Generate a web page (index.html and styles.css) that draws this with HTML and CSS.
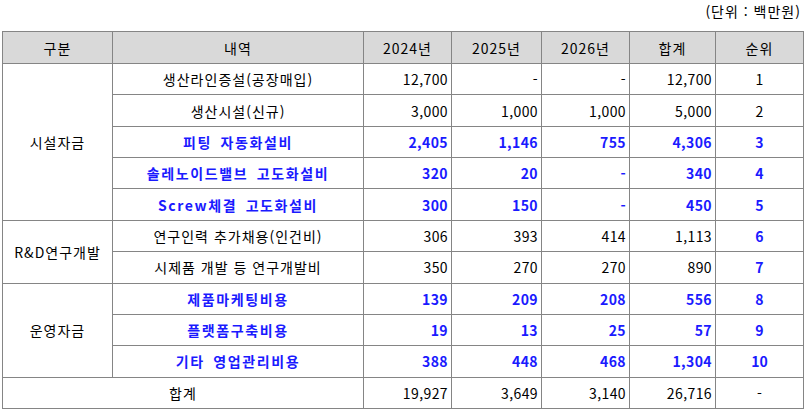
FILE: index.html
```html
<!DOCTYPE html>
<html lang="ko">
<head>
<meta charset="utf-8">
<title>자금 사용 계획</title>
<link rel="stylesheet" href="styles.css">
</head>
<body>
<div class="wrap">
  <div class="unit">(단위 : 백만원)</div>
  <table class="plan">
    <colgroup>
      <col class="c-cat"><col class="c-desc"><col class="c-y1"><col class="c-y2"><col class="c-y3"><col class="c-sum"><col class="c-rank">
    </colgroup>
    <thead>
      <tr class="head">
        <th>구분</th><th>내역</th><th>2024년</th><th>2025년</th><th>2026년</th><th>합계</th><th>순위</th>
      </tr>
    </thead>
    <tbody>
      <tr>
        <td class="cat" rowspan="5">시설자금</td>
        <td class="desc">생산라인증설(공장매입)</td>
        <td class="num">12,700</td><td class="num">-</td><td class="num">-</td><td class="num">12,700</td><td class="rank">1</td>
      </tr>
      <tr>
        <td class="desc">생산시설(신규)</td>
        <td class="num">3,000</td><td class="num">1,000</td><td class="num">1,000</td><td class="num">5,000</td><td class="rank">2</td>
      </tr>
      <tr class="hl">
        <td class="desc">피팅 자동화설비</td>
        <td class="num">2,405</td><td class="num">1,146</td><td class="num">755</td><td class="num">4,306</td><td class="rank">3</td>
      </tr>
      <tr class="hl">
        <td class="desc">솔레노이드밸브 고도화설비</td>
        <td class="num">320</td><td class="num">20</td><td class="num">-</td><td class="num">340</td><td class="rank">4</td>
      </tr>
      <tr class="hl">
        <td class="desc">Screw체결 고도화설비</td>
        <td class="num">300</td><td class="num">150</td><td class="num">-</td><td class="num">450</td><td class="rank">5</td>
      </tr>
      <tr>
        <td class="cat" rowspan="2">R&amp;D연구개발</td>
        <td class="desc">연구인력 추가채용(인건비)</td>
        <td class="num">306</td><td class="num">393</td><td class="num">414</td><td class="num">1,113</td><td class="rank hl-cell">6</td>
      </tr>
      <tr>
        <td class="desc">시제품 개발 등 연구개발비</td>
        <td class="num">350</td><td class="num">270</td><td class="num">270</td><td class="num">890</td><td class="rank hl-cell">7</td>
      </tr>
      <tr class="hl">
        <td class="cat" rowspan="3">운영자금</td>
        <td class="desc">제품마케팅비용</td>
        <td class="num">139</td><td class="num">209</td><td class="num">208</td><td class="num">556</td><td class="rank">8</td>
      </tr>
      <tr class="hl">
        <td class="desc">플랫폼구축비용</td>
        <td class="num">19</td><td class="num">13</td><td class="num">25</td><td class="num">57</td><td class="rank">9</td>
      </tr>
      <tr class="hl">
        <td class="desc">기타 영업관리비용</td>
        <td class="num">388</td><td class="num">448</td><td class="num">468</td><td class="num">1,304</td><td class="rank">10</td>
      </tr>
      <tr class="total">
        <td class="desc" colspan="2">합계</td>
        <td class="num">19,927</td><td class="num">3,649</td><td class="num">3,140</td><td class="num">26,716</td><td class="rank">-</td>
      </tr>
    </tbody>
  </table>
</div>
</body>
</html>
```

FILE: styles.css
```css
html, body {
  margin: 0;
  padding: 0;
  background: #ffffff;
}

body {
  font-family: "Noto Sans CJK KR", "Noto Sans", sans-serif;
  font-size: 14px;
  color: #000000;
}

.wrap {
  padding: 0 5px 0 2px;
}

.unit {
  height: 31px;
  line-height: 23px;
  text-align: right;
  padding-right: 2px;
  letter-spacing: 1px;
}

.plan {
  border-collapse: collapse;
  table-layout: fixed;
  width: 801px;
  border: 1px solid #000000;
}

.c-cat { width: 110px; }
.c-desc { width: 251px; }
.c-y1 { width: 88px; }
.c-y2 { width: 90px; }
.c-y3 { width: 88px; }
.c-sum { width: 86px; }
.c-rank { width: 88px; }

.plan th,
.plan td {
  border: 1px solid #858585;
  padding: 0;
  line-height: 18px;
  white-space: nowrap;
  overflow: hidden;
}

.head {
  height: 32px;
}

.head th {
  background: #d9d9d9;
  font-weight: normal;
  text-align: center;
  letter-spacing: 1px;
}

.plan tbody tr {
  height: 31.36px;
}

.cat,
.desc {
  text-align: center;
  letter-spacing: 1px;
}

.num {
  text-align: right;
  padding-right: 3px !important;
  letter-spacing: 0.4px;
}

.rank {
  text-align: center;
}

.hl td,
.hl-cell {
  color: #1a1aff;
  font-weight: bold;
}

.hl .cat {
  color: #000000;
  font-weight: normal;
}

.hl .desc {
  letter-spacing: 1.6px;
  word-spacing: 3px;
}
```
